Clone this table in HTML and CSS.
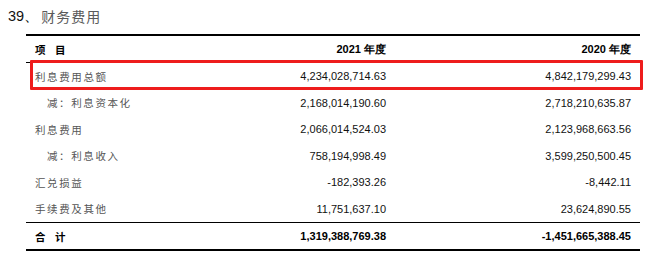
FILE: index.html
```html
<!DOCTYPE html>
<html lang="zh">
<head>
<meta charset="utf-8">
<link rel="stylesheet" href="styles.css">
</head>
<body>
<div class="page">
  <div class="title"><span class="num">39、</span><span class="cn">财务费用</span></div>
  <div class="table">
    <div class="row head">
      <div class="label">项&nbsp;&nbsp;&nbsp;&nbsp;目</div>
      <div class="val">2021 年度</div>
      <div class="val">2020 年度</div>
    </div>
    <div class="row">
      <div class="label">利息费用总额</div>
      <div class="val">4,234,028,714.63</div>
      <div class="val">4,842,179,299.43</div>
    </div>
    <div class="row">
      <div class="label indent">减：利息资本化</div>
      <div class="val">2,168,014,190.60</div>
      <div class="val">2,718,210,635.87</div>
    </div>
    <div class="row">
      <div class="label">利息费用</div>
      <div class="val">2,066,014,524.03</div>
      <div class="val">2,123,968,663.56</div>
    </div>
    <div class="row">
      <div class="label indent">减：利息收入</div>
      <div class="val">758,194,998.49</div>
      <div class="val">3,599,250,500.45</div>
    </div>
    <div class="row">
      <div class="label">汇兑损益</div>
      <div class="val">-182,393.26</div>
      <div class="val">-8,442.11</div>
    </div>
    <div class="row">
      <div class="label">手续费及其他</div>
      <div class="val">11,751,637.10</div>
      <div class="val">23,624,890.55</div>
    </div>
    <div class="row total">
      <div class="label">合&nbsp;&nbsp;&nbsp;&nbsp;计</div>
      <div class="val">1,319,388,769.38</div>
      <div class="val">-1,451,665,388.45</div>
    </div>
  </div>
  <div class="highlight"></div>
</div>
</body>
</html>
```
FILE: styles.css
```css
html, body {
  margin: 0;
  padding: 0;
  background: #fff;
}
.page {
  position: relative;
  width: 646px;
  height: 253px;
  overflow: hidden;
}
.title {
  height: 34px;
  padding-left: 8px;
  display: flex;
  align-items: flex-start;
  padding-top: 7px;
  box-sizing: border-box;
  font-size: 14.5px;
  line-height: 18px;
}
.title .num {
  font-family: "Liberation Sans", Arial, sans-serif;
  color: #111;
  margin-right: 2px;
}
.title .cn {
  font-family: "Noto Sans CJK SC", sans-serif;
  color: #5a5a5a;
  letter-spacing: 1px;
  font-size: 14px;
}
.table {
  margin-left: 26px;
  width: 614px;
  border-top: 2px solid #000;
  border-bottom: 2px solid #000;
}
.row {
  display: grid;
  grid-template-columns: 224px 145px 245px;
  height: 26.5px;
  align-items: center;
}
.row.head {
  height: 26px;
  border-bottom: 1px solid #000;
}
.row.total {
  height: 26px;
  border-top: 1px solid #000;
}
.label {
  padding-left: 9px;
  font-family: "Noto Sans CJK SC", sans-serif;
  font-size: 10.5px;
  letter-spacing: 1.6px;
  color: #555;
}
.label.indent {
  padding-left: 21px;
}
.val {
  text-align: right;
  padding-right: 9px;
  font-family: "Liberation Sans Narrow", "Arial Narrow", "Liberation Sans", sans-serif;
  font-size: 11px;
  color: #111;
}
.head .label, .total .label {
  color: #000;
  font-weight: 700;
  letter-spacing: 0;
}
.head .val, .total .val {
  font-weight: 700;
  color: #000;
}
.highlight {
  position: absolute;
  left: 30px;
  top: 60px;
  width: 613px;
  height: 30px;
  box-sizing: border-box;
  border: 3px solid #ee1c1c;
  border-radius: 1px;
}
```
